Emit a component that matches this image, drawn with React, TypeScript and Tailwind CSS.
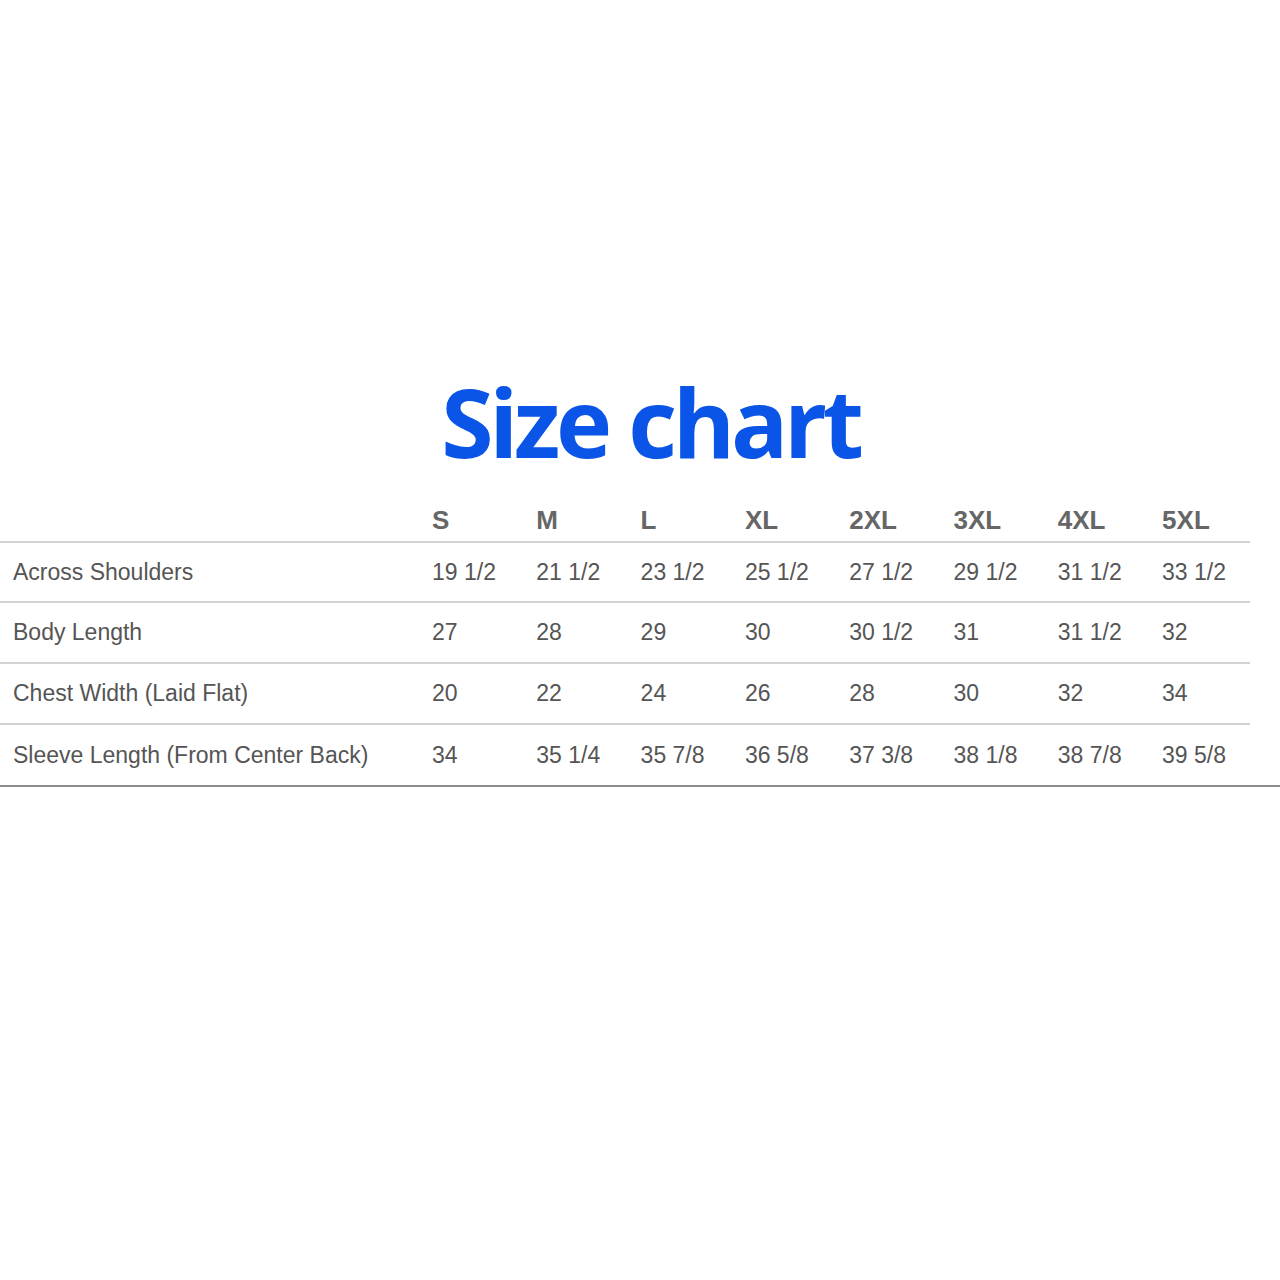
import React from 'react';

const sizes = ['S', 'M', 'L', 'XL', '2XL', '3XL', '4XL', '5XL'];

const rows = [
  { label: 'Across Shoulders', values: ['19 1/2', '21 1/2', '23 1/2', '25 1/2', '27 1/2', '29 1/2', '31 1/2', '33 1/2'] },
  { label: 'Body Length', values: ['27', '28', '29', '30', '30 1/2', '31', '31 1/2', '32'] },
  { label: 'Chest Width (Laid Flat)', values: ['20', '22', '24', '26', '28', '30', '32', '34'] },
  { label: 'Sleeve Length (From Center Back)', values: ['34', '35 1/4', '35 7/8', '36 5/8', '37 3/8', '38 1/8', '38 7/8', '39 5/8'] },
];

function App() {
  return (
    <div className="min-h-[1280px] bg-white pt-[374px]">
      <h1
        className="text-center text-[95px] leading-none font-bold text-[#0a55e8] pl-[21px] tracking-[-4.3px]"
        style={{ fontFamily: '"Open Sans", sans-serif' }}
      >
        Size chart
      </h1>

      <div className="mt-[31px] font-['Liberation_Sans',Arial,sans-serif]">
        <div className="w-[1250px]">
          <div className="grid grid-cols-[420px_repeat(8,104.3px)] h-[43px] border-b-2 border-[#d2d2d2] items-center text-[26px] font-bold text-[#666]">
            <div />
            {sizes.map((s) => (
              <div key={s} className="pl-3">{s}</div>
            ))}
          </div>

          {rows.map((row, i) => (
            <div
              key={row.label}
              className={`grid grid-cols-[420px_repeat(8,104.3px)] items-center text-[23px] text-[#555] ${
                i === 0 || i === rows.length - 1 ? 'h-[60px]' : 'h-[61px]'
              } ${i < rows.length - 1 ? 'border-b-2 border-[#d2d2d2]' : ''}`}
            >
              <div className="pl-[13px]">{row.label}</div>
              {row.values.map((v, j) => (
                <div key={j} className="pl-3 whitespace-nowrap">{v}</div>
              ))}
            </div>
          ))}
        </div>
        <div className="h-[2px] bg-[#8c8c8c]" />
      </div>
    </div>
  );
}

export default App;
